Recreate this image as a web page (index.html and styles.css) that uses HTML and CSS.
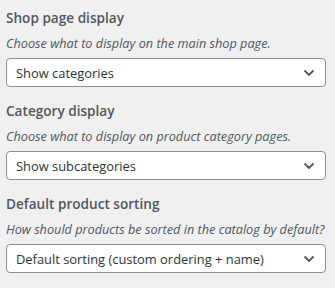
FILE: index.html
```html
<!DOCTYPE html>
<html lang="en">
<head>
  <meta charset="UTF-8">
  <title>Shop settings</title>
  <link rel="stylesheet" href="styles.css">
</head>
<body>
  <main class="settings">
    <div class="field">
      <label class="field-label" for="shopDisplay">Shop page display</label>
      <p class="field-desc">Choose what to display on the main shop page.</p>
      <div class="select">
        <span class="select-value" id="shopDisplay">Show categories</span>
        <svg class="select-arrow" viewBox="0 0 12 8" width="12" height="8"><path d="M1.5 1.5 6 6l4.5-4.5" fill="none" stroke="#50575e" stroke-width="1.8"/></svg>
      </div>
    </div>

    <div class="field">
      <label class="field-label" for="catDisplay">Category display</label>
      <p class="field-desc">Choose what to display on product category pages.</p>
      <div class="select">
        <span class="select-value" id="catDisplay">Show subcategories</span>
        <svg class="select-arrow" viewBox="0 0 12 8" width="12" height="8"><path d="M1.5 1.5 6 6l4.5-4.5" fill="none" stroke="#50575e" stroke-width="1.8"/></svg>
      </div>
    </div>

    <div class="field">
      <label class="field-label" for="sorting">Default product sorting</label>
      <p class="field-desc">How should products be sorted in the catalog by default?</p>
      <div class="select">
        <span class="select-value" id="sorting">Default sorting (custom ordering + name)</span>
        <svg class="select-arrow" viewBox="0 0 12 8" width="12" height="8"><path d="M1.5 1.5 6 6l4.5-4.5" fill="none" stroke="#50575e" stroke-width="1.8"/></svg>
      </div>
    </div>
  </main>
</body>
</html>
```

FILE: styles.css
```css
body {
  margin: 0;
  background: #f0f0f1;
  color: #1d2327;
  font-family: 'Open Sans', 'Noto Sans', sans-serif;
}

.settings {
  padding: 8px 9px 0 6px;
}

.field {
  padding-bottom: 14px;
}

.field-label {
  display: block;
  font-size: 13.6px;
  font-weight: 600;
  line-height: 20px;
  color: #50575e;
}

.field-desc {
  margin: 5px 0;
  font-size: 12.7px;
  font-style: italic;
  line-height: 20px;
  color: #50575e;
}

.select {
  display: flex;
  align-items: center;
  justify-content: space-between;
  height: 27px;
  padding: 0 10px 0 9px;
  background: #fff;
  border: 1px solid #8c8f94;
  border-radius: 4px;
  font-size: 12.9px;
  color: #2c3338;
}

.select-arrow {
  display: block;
}
```
